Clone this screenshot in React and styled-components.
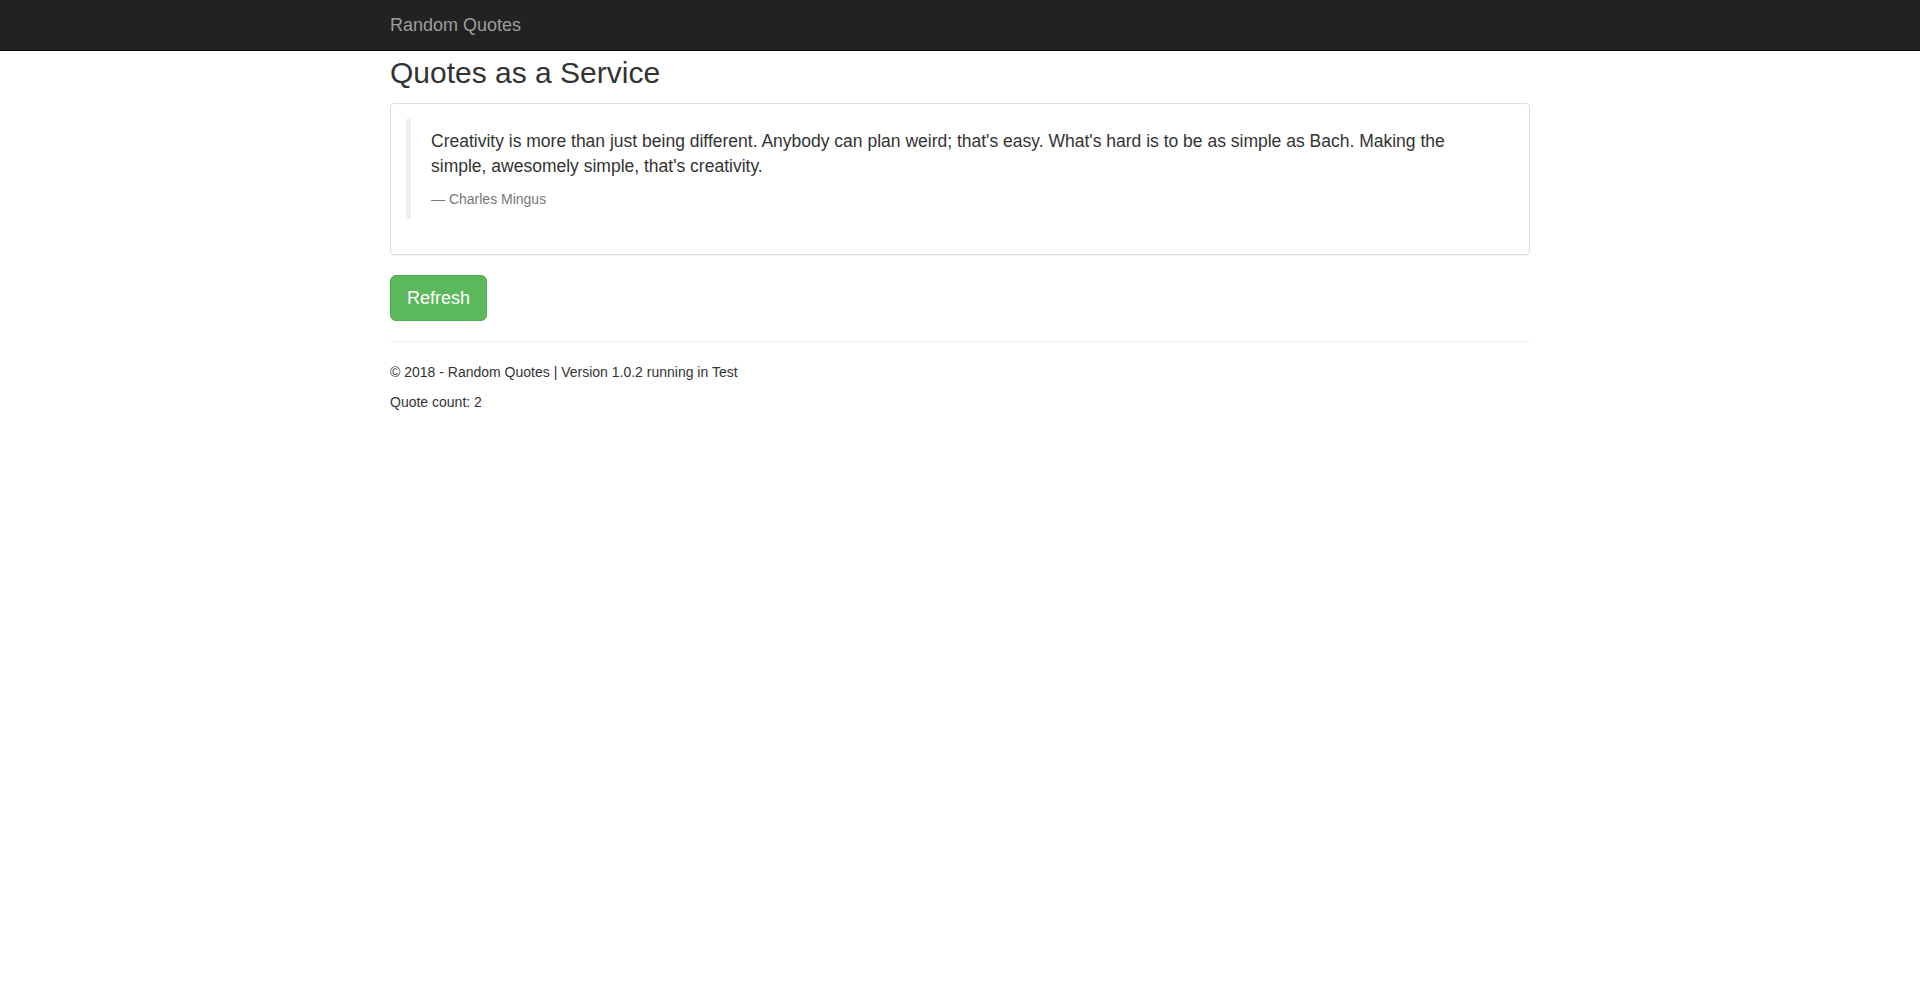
import React, { useState } from 'react'
import styled, { createGlobalStyle } from 'styled-components'

const GlobalStyle = createGlobalStyle`
  * {
    box-sizing: border-box;
  }
  body {
    margin: 0;
    font-family: "Liberation Sans", Arial, Helvetica, sans-serif;
    font-size: 14px;
    line-height: 1.42857143;
    color: #333;
    background: #fff;
  }
`

const StyledNavbar = styled.nav`
  height: 51px;
  background-color: #222;
  border-bottom: 1px solid #080808;
`

const StyledContainer = styled.div`
  width: 1170px;
  margin: 0 auto;
  padding: 0 15px;
`

const StyledBrand = styled.a`
  display: block;
  padding: 15px 0;
  font-size: 18px;
  line-height: 20px;
  color: #9d9d9d;
  text-decoration: none;
  cursor: pointer;
`

const StyledTitle = styled.h2`
  margin: 5px 0 14px;
  font-size: 30px;
  font-weight: 500;
  line-height: 1.1;
`

const StyledPanel = styled.div`
  margin-bottom: 20px;
  border: 1px solid #ddd;
  border-radius: 4px;
  box-shadow: 0 1px 1px rgba(0, 0, 0, 0.05);
`

const StyledPanelBody = styled.div`
  padding: 15px;
`

const StyledQuote = styled.blockquote`
  margin: 0 0 20px;
  padding: 10px 20px;
  border-left: 5px solid #eee;
  font-size: 17.5px;

  p {
    margin: 0 0 10px;
  }

  footer {
    font-size: 80%;
    line-height: 1.42857143;
    color: #777;

    &::before {
      content: '\\2014 \\00A0';
    }
  }
`

const StyledButton = styled.button`
  display: inline-block;
  padding: 10px 16px;
  font-family: inherit;
  font-size: 18px;
  line-height: 1.3333333;
  color: #fff;
  background-color: #5cb85c;
  border: 1px solid #4cae4c;
  border-radius: 6px;
  cursor: pointer;

  &:hover {
    background-color: #449d44;
    border-color: #398439;
  }
`

const StyledRule = styled.hr`
  margin: 20px 0;
  border: 0;
  border-top: 1px solid #eee;
`

const StyledFooterLine = styled.p`
  margin: 0 0 10px;
`

const quotes = [
  {
    text: "Creativity is more than just being different. Anybody can plan weird; that's easy. What's hard is to be as simple as Bach. Making the simple, awesomely simple, that's creativity.",
    author: 'Charles Mingus',
  },
  {
    text: 'Simplicity is prerequisite for reliability.',
    author: 'Edsger W. Dijkstra',
  },
]

const App = () => {
  const [index, setIndex] = useState(0)
  const quote = quotes[index]

  const refresh = () => {
    setIndex((index + 1) % quotes.length)
  }

  return (
    <>
      <GlobalStyle />
      <StyledNavbar>
        <StyledContainer>
          <StyledBrand>Random Quotes</StyledBrand>
        </StyledContainer>
      </StyledNavbar>
      <StyledContainer>
        <StyledTitle>Quotes as a Service</StyledTitle>
        <StyledPanel>
          <StyledPanelBody>
            <StyledQuote>
              <p>{quote.text}</p>
              <footer>{quote.author}</footer>
            </StyledQuote>
          </StyledPanelBody>
        </StyledPanel>
        <StyledButton onClick={refresh}>Refresh</StyledButton>
        <StyledRule />
        <footer>
          <StyledFooterLine>© 2018 - Random Quotes | Version 1.0.2 running in Test</StyledFooterLine>
          <StyledFooterLine>Quote count: {quotes.length}</StyledFooterLine>
        </footer>
      </StyledContainer>
    </>
  )
}

export default App
